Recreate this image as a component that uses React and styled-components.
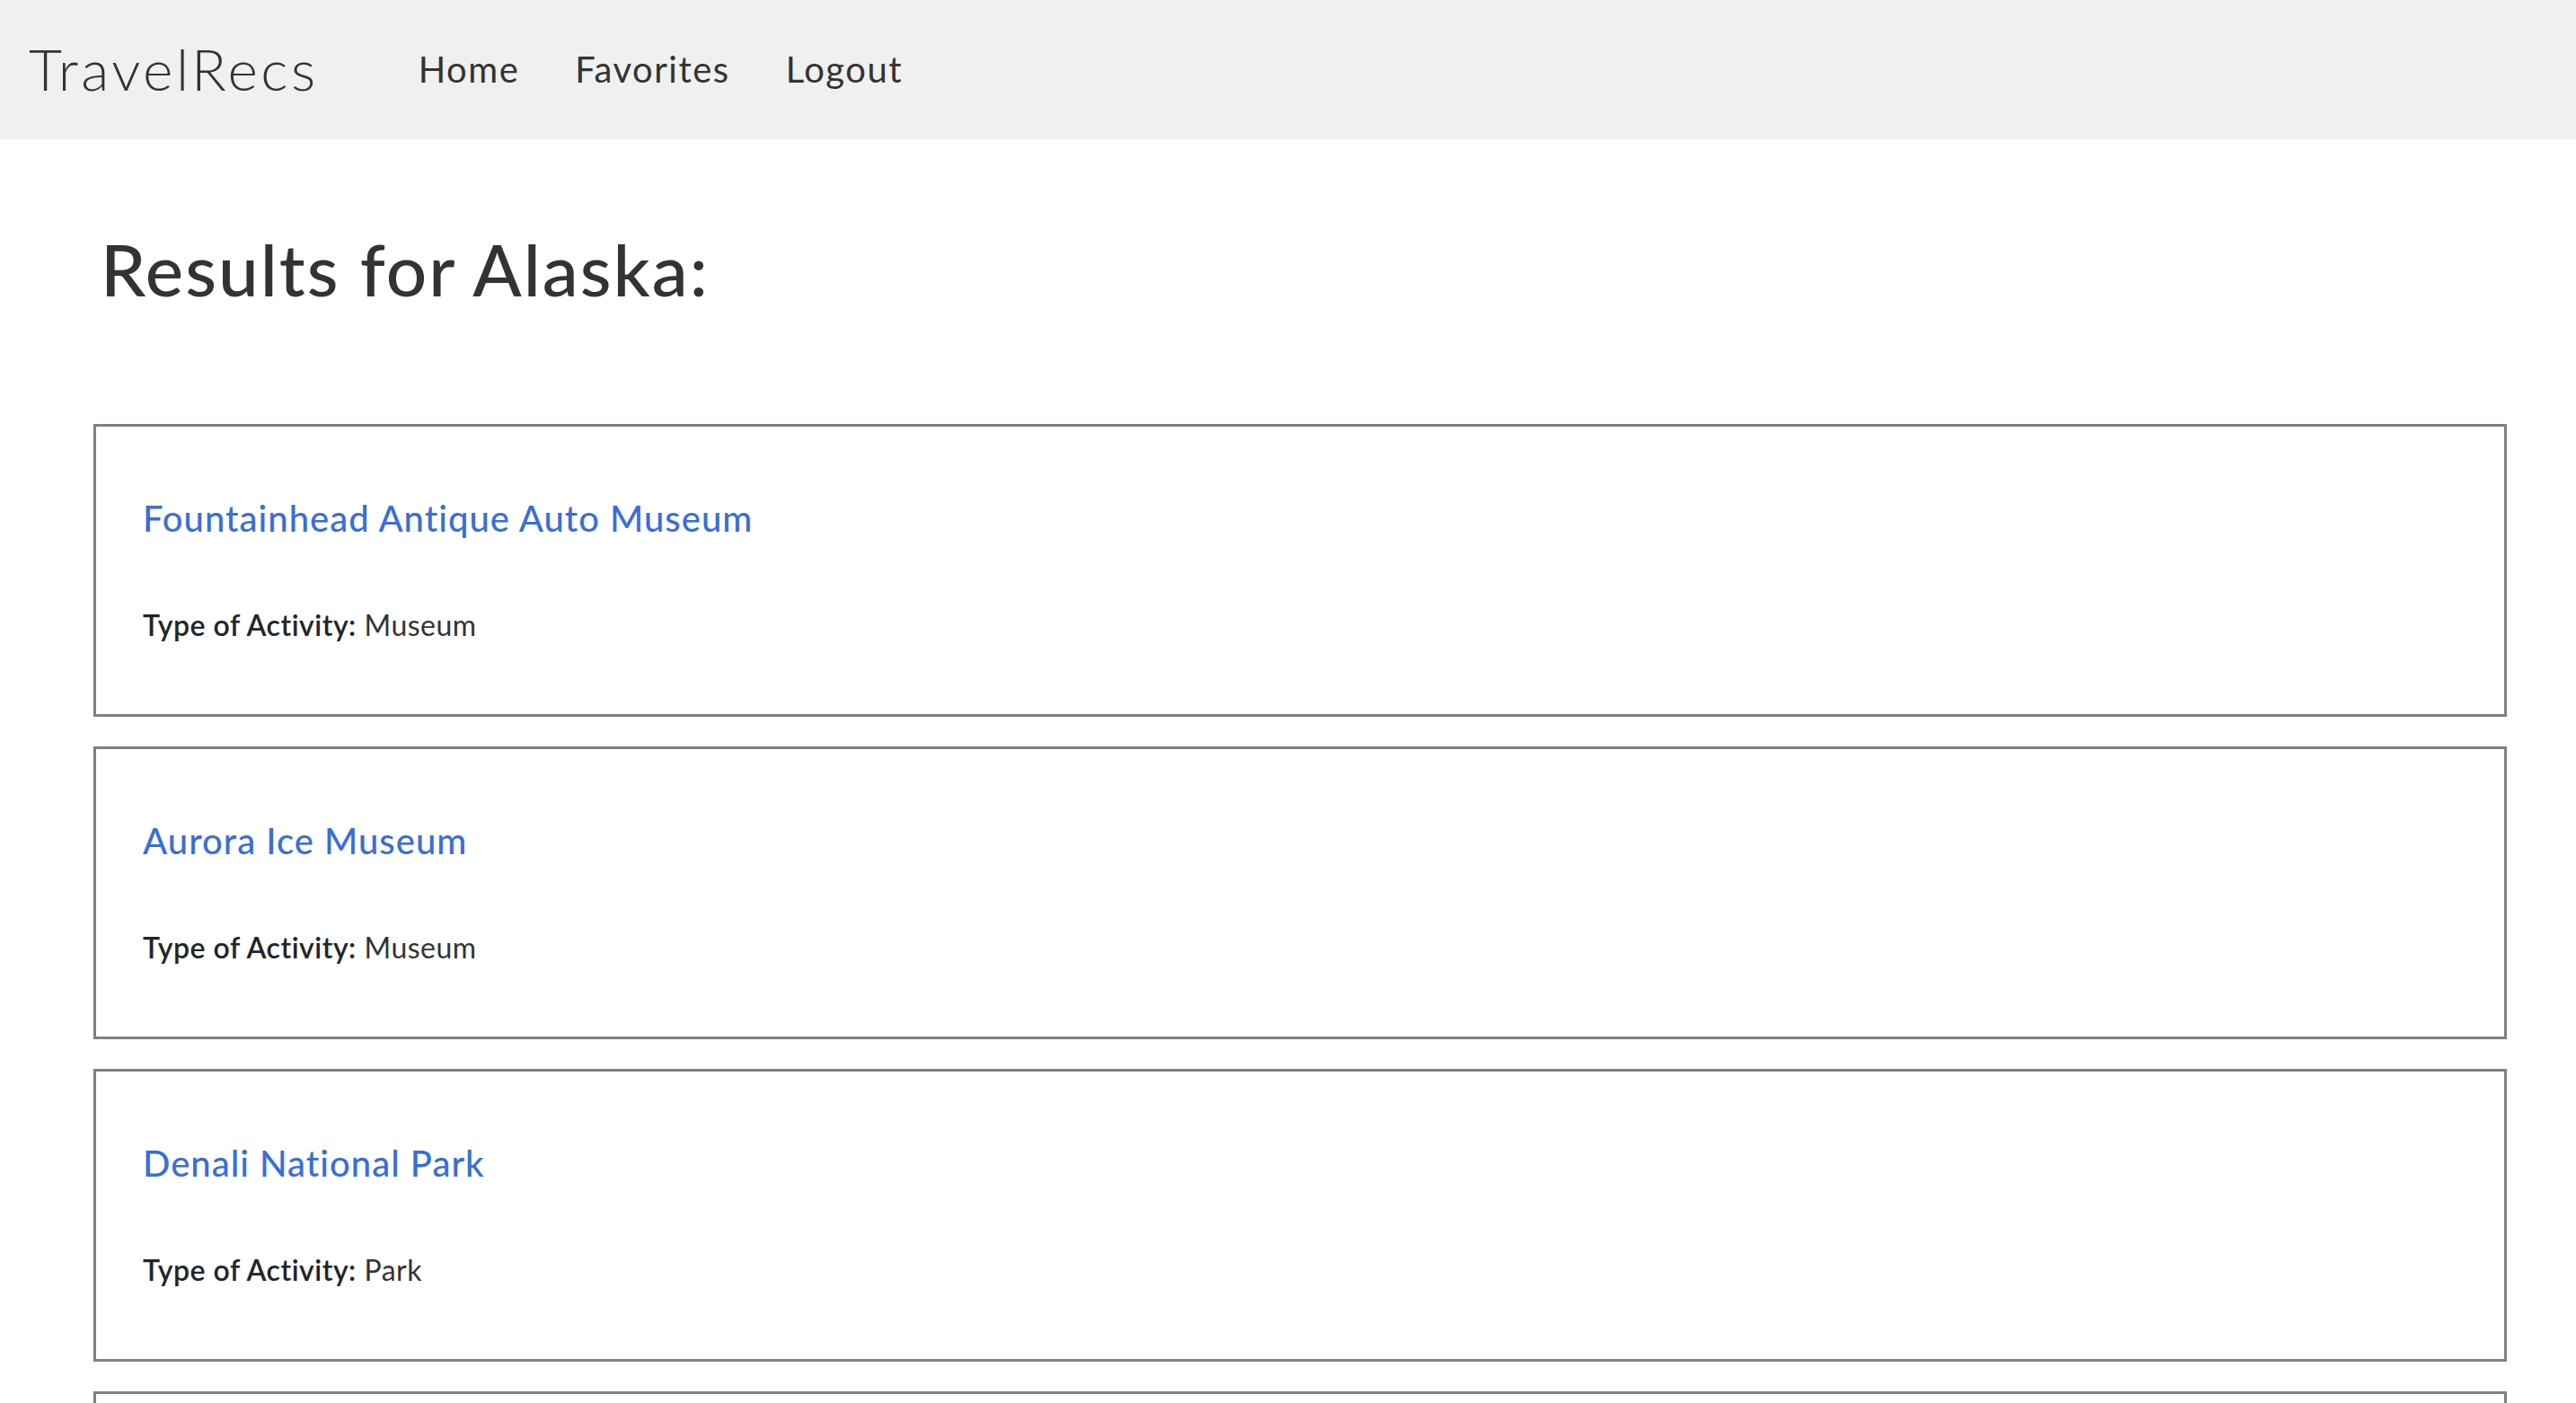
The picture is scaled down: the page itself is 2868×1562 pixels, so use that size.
import React from "react";
import styled, { createGlobalStyle } from "styled-components";

const GlobalStyle = createGlobalStyle`
  body {
    margin: 0;
    background: #ffffff;
    font-family: Lato, "Open Sans", sans-serif;
    color: #212529;
  }
`;

const NavBar = styled.nav`
  height: 155px;
  background-color: #f0f0f0;
  display: flex;
  align-items: center;
  padding-left: 32px;
  padding-bottom: 2px;
  box-sizing: border-box;
`;

const Brand = styled.div`
  font-size: 64px;
  font-weight: 300;
  letter-spacing: 3.5px;
  color: #333333;
  margin-right: 80px;
`;

const NavLinks = styled.div`
  display: flex;
  align-items: center;
`;

const NavLink = styled.a`
  font-size: 40px;
  font-weight: 400;
  letter-spacing: 1.5px;
  color: #333333;
  padding: 0 31px;
  text-decoration: none;
  cursor: pointer;
`;

const Container = styled.main`
  padding: 0 77px 0 104px;
`;

const Title = styled.h1`
  margin: 96px 0 125px;
  padding-left: 8px;
  font-size: 80px;
  line-height: 96px;
  font-weight: 500;
  letter-spacing: 2px;
  color: #333333;
`;

const ResultsList = styled.div`
  display: flex;
  flex-direction: column;
  gap: 33px;
`;

const Card = styled.div`
  border: 3px solid #808080;
  height: 326px;
  box-sizing: border-box;
  padding: 78px 52px 0;
`;

const CardTitle = styled.a`
  display: block;
  font-size: 40px;
  line-height: 48px;
  font-weight: 500;
  letter-spacing: 1px;
  color: #3a6ed6;
  text-decoration: none;
  margin-bottom: 75px;
`;

const Detail = styled.p`
  margin: 0;
  font-size: 32px;
  line-height: 40px;
  letter-spacing: 0.5px;
  color: #333333;
`;

const Label = styled.span`
  font-weight: 600;
  color: #212529;
`;

const results = [
  { name: "Fountainhead Antique Auto Museum", type: "Museum" },
  { name: "Aurora Ice Museum", type: "Museum" },
  { name: "Denali National Park", type: "Park" },
  { name: "Chena Hot Springs Resort", type: "Resort" },
];

function App() {
  return (
    <>
      <GlobalStyle />
      <NavBar>
        <Brand>TravelRecs</Brand>
        <NavLinks>
          <NavLink>Home</NavLink>
          <NavLink>Favorites</NavLink>
          <NavLink>Logout</NavLink>
        </NavLinks>
      </NavBar>
      <Container>
        <Title>Results for Alaska:</Title>
        <ResultsList>
          {results.map((r) => (
            <Card key={r.name}>
              <CardTitle>{r.name}</CardTitle>
              <Detail>
                <Label>Type of Activity:</Label> {r.type}
              </Detail>
            </Card>
          ))}
        </ResultsList>
      </Container>
    </>
  );
}

export default App;
